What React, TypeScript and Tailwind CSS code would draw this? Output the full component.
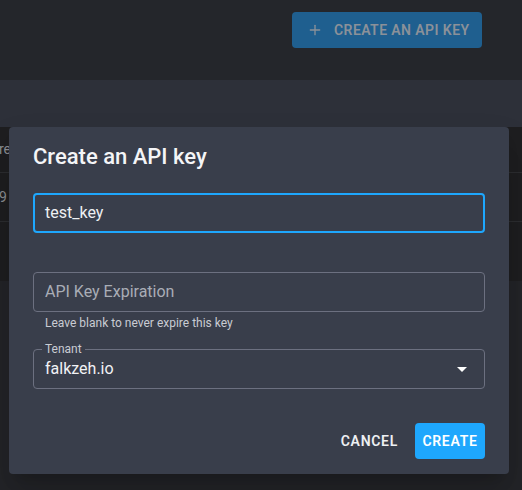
import { Plus } from "lucide-react";

const font = { fontFamily: "Roboto, 'Liberation Sans', sans-serif" };

function ArrowDown() {
  return (
    <svg width="24" height="24" viewBox="0 0 24 24" className="fill-white">
      <path d="M7 10l5 5 5-5z" />
    </svg>
  );
}

export default function App() {
  return (
    <div
      className="relative h-[490px] w-[522px] overflow-hidden bg-[#1e1f22]"
      style={font}
    >
      {/* header */}
      <div className="flex h-[80px] items-start justify-end bg-[#24262b] pr-[40px] pt-[12px]">
        <button className="flex h-[36px] w-[190px] items-center gap-[11px] rounded-[4px] bg-[#1f5f8f] pl-[15px] text-[14px] font-semibold tracking-[0.03em] text-[#8b9199]">
          <Plus size={16} strokeWidth={2} />
          CREATE AN API KEY
        </button>
      </div>

      {/* band */}
      <div className="h-[47px] bg-[#2d3039]" />

      {/* table behind */}
      <div className="bg-[#1e1e20] text-[14px] text-[#8c8e93]">
        <div className="flex h-[46px] items-center border-b border-[#2c2d30]">
          <span className="-ml-[1px]">re</span>
        </div>
        <div className="flex h-[49px] items-center border-b border-[#2c2d30]">
          <span className="-ml-[1px]">9</span>
        </div>
        <div className="h-[59px]" />
      </div>
      <div className="h-[300px] bg-[#232428]" />

      {/* dialog */}
      <div className="absolute left-[9px] top-[127px] flex h-[347px] w-[500px] flex-col rounded-[4px] bg-[#393e4b] px-[24px] shadow-[0_11px_15px_-7px_rgba(0,0,0,0.2),0_24px_38px_3px_rgba(0,0,0,0.14)]">
        <h2 className="pt-[14px] text-[22px] font-medium leading-[32px] text-[#f4f5f7]">
          Create an API key
        </h2>

        <div className="mt-[20px] flex h-[40px] items-center rounded-[4px] border-2 border-[#1ea7fd] pl-[10px] text-[16px] text-[#eef0f3]">
          test_key
        </div>

        <div className="mt-[39px] flex h-[40px] items-center rounded-[4px] border border-[#6c7080] pl-[11px] text-[16px] text-[#a9adb6]">
          API Key Expiration
        </div>
        <p className="ml-[12px] mt-[1px] text-[12px] leading-[20px] text-[#c9ccd3]">
          Leave blank to never expire this key
        </p>

        <div className="relative mt-[16px] flex h-[40px] items-center justify-between rounded-[4px] border border-[#6c7080] pl-[11px] pr-[14px]">
          <span className="absolute -top-[8px] left-[8px] bg-[#393e4b] px-[3px] text-[12px] leading-[14px] text-[#c9ccd3]">
            Tenant
          </span>
          <span className="text-[16px] text-[#f1f2f5]">falkzeh.io</span>
          <span className="-mr-[4px]">
            <ArrowDown />
          </span>
        </div>

        <div className="mt-auto mb-[15px] flex items-center justify-end gap-[9px]">
          <button className="h-[36px] px-[8px] text-[14px] font-semibold tracking-[0.05em] text-[#eef0f3]">
            CANCEL
          </button>
          <button className="h-[36px] w-[70px] rounded-[4px] bg-[#1ea7fd] text-[14px] font-semibold tracking-[0.05em] text-white">
            CREATE
          </button>
        </div>
      </div>
    </div>
  );
}
